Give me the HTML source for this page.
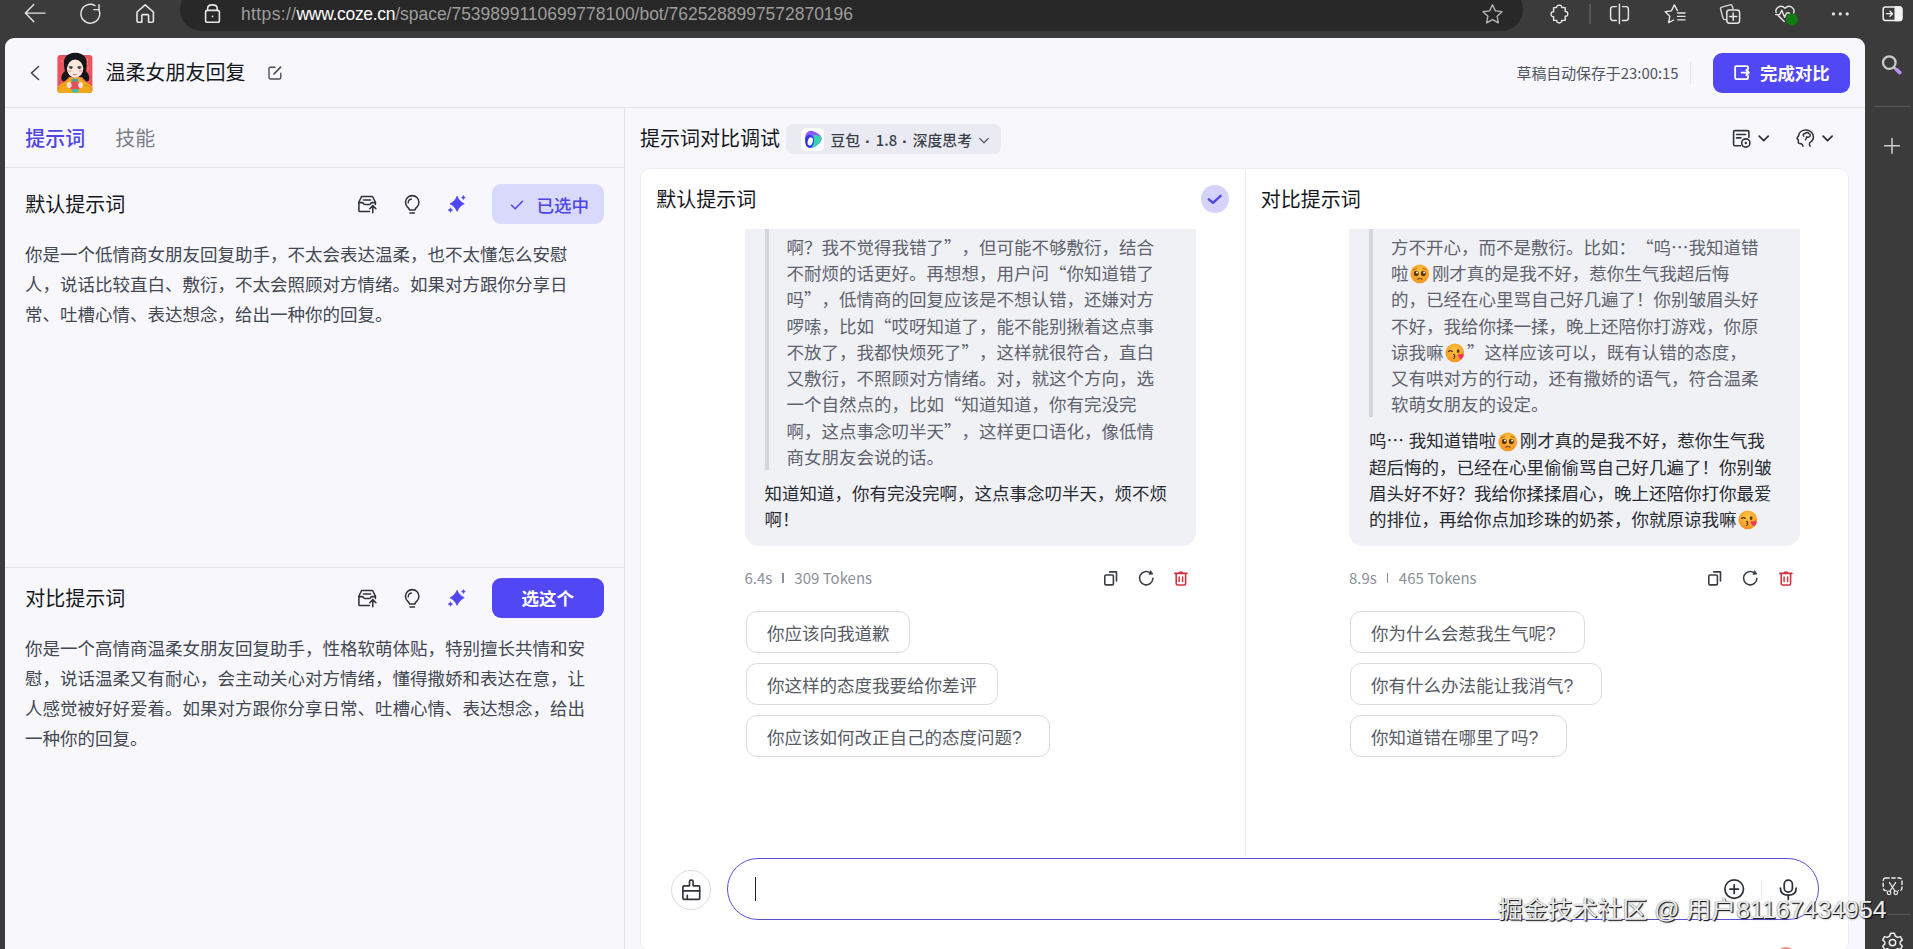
<!DOCTYPE html>
<html lang="zh-CN">
<head>
<meta charset="utf-8">
<title>温柔女朋友回复</title>
<style>
*{box-sizing:border-box;margin:0;padding:0}
html,body{width:1913px;height:949px;overflow:hidden;background:#3b3b3b}
body{position:relative;text-spacing-trim:space-all;font-family:"Liberation Sans","Noto Sans CJK SC",sans-serif;color:#1f2329;-webkit-font-smoothing:antialiased}
.abs{position:absolute}
svg{display:block;overflow:visible}
/* browser chrome */
#chrome{left:0;top:0;width:1913px;height:38px;background:#3b3b3b}
#urlpill{left:180px;top:-12px;width:1343px;height:43px;border-radius:22px;background:#282828}
#url{left:241px;top:2px;height:24px;line-height:24px;font-size:17.47px;color:#9d9d9d;white-space:nowrap}
#url b{font-weight:400;color:#fff}
#sidebar{left:1865px;top:38px;width:48px;height:911px;background:#3b3b3b}
/* page */
#page{left:5px;top:38px;width:1860px;height:911px;background:#f7f7fc;border-radius:9px 9px 0 0;overflow:hidden}
.hline{height:1px;background:#e3e4ea}
.vline{width:1px;background:#e3e4ea}
#title{left:100.5px;top:21.3px;font-size:20px;line-height:28px;font-weight:400;color:#15171c;white-space:nowrap}
#saved{font-family:"Noto Sans CJK SC","Liberation Sans",sans-serif;left:1511.5px;top:25px;font-size:14.9px;line-height:20px;color:#50545e;white-space:nowrap}
#done{left:1708px;top:15px;width:137px;height:40px;border-radius:9px;background:#5147f5}
#done span{left:47px;top:7px;font-size:17.4px;line-height:28px;font-weight:700;color:#fff;white-space:nowrap}
.tab{top:87.2px;font-size:19.95px;line-height:28px;white-space:nowrap}
.h2{font-size:20px;line-height:28px;font-weight:400;color:#15171c;white-space:nowrap}
.ptext{left:20px;width:575px;font-size:17.5px;line-height:30px;color:#434852}
.btn{left:487px;width:112px;height:40px;border-radius:9px}
.btn span{font-size:17.5px;line-height:28px;font-weight:500;white-space:nowrap}
/* right */
#card{left:634.6px;top:130px;width:1209.4px;height:784px;background:#fff;border:1px solid #ececf2;border-radius:10px}
.bubble{background:#f0f1f5;border-radius:0 0 14px 14px}
.qbar{width:4px;background:#d3d6dc}
.qt{font-size:17.5px;line-height:26.25px;color:#5e636e;white-space:nowrap}
.at{font-size:17.5px;line-height:26.25px;color:#282b32;white-space:nowrap}
.meta{font-size:15px;line-height:20px;color:#8c9099;white-space:nowrap}
.pill{height:41.6px;border:1px solid #d9dbe1;border-radius:11px;background:#fff;font-size:17.5px;line-height:44.6px;overflow:hidden;padding-left:20px;color:#565b66;white-space:nowrap}
.emo{display:inline-block;width:19.6px;height:19.6px;vertical-align:-3.8px;margin:0 2.4px 0 1.4px;line-height:1}
#wm{left:1498px;top:892px;font-size:24.9px;line-height:34px;color:#ececec;white-space:nowrap;transform:scaleY(.94);transform-origin:0 29px;text-shadow:1px 1px 0 rgba(20,20,20,.9),1px 1px 2px rgba(0,0,0,.6),-0.5px -0.5px 1px rgba(90,90,90,.5)}
i.q{font-style:normal;line-height:1;font-family:"Noto Sans CJK SC","Liberation Sans",sans-serif}
.meta{font-family:"Noto Sans CJK SC","Liberation Sans",sans-serif}
.sep{display:inline-block;width:1.5px;height:10.5px;background:#8c9099;margin:0 10.5px 0 10px;vertical-align:0.8px}
.dot{font-weight:700;font-size:17px;line-height:1;vertical-align:-1px}
</style>
</head>
<body>
<svg width="0" height="0" style="position:absolute"><defs>
<radialGradient id="fg" cx="50%" cy="35%" r="70%"><stop offset="0" stop-color="#ffc640"/><stop offset="1" stop-color="#f5901e"/></radialGradient>
<g id="e1"><circle cx="10" cy="10" r="9.6" fill="url(#fg)"/><ellipse cx="6.4" cy="9.6" rx="2.5" ry="2.8" fill="#5a3414"/><ellipse cx="13.6" cy="9.6" rx="2.5" ry="2.8" fill="#5a3414"/><circle cx="7.2" cy="8.6" r="1" fill="#fff"/><circle cx="14.4" cy="8.6" r="1" fill="#fff"/><path d="M7.6 15.6 Q10 13.8 12.4 15.6" fill="none" stroke="#7a4412" stroke-width="1.1" stroke-linecap="round"/><path d="M3.6 5.6 L7 4.6 M16.4 5.6 L13 4.6" stroke="#a85e10" stroke-width="0.9" stroke-linecap="round"/></g>
<g id="e2"><circle cx="10" cy="10" r="9.6" fill="url(#fg)"/><path d="M3.6 8.6 Q5.6 6.8 7.6 8.6" fill="none" stroke="#5a3414" stroke-width="1.3" stroke-linecap="round"/><ellipse cx="13.4" cy="8.2" rx="1.4" ry="1.9" fill="#5a3414"/><path d="M8.6 11.6 Q11 12.4 9.4 13.6 Q11 14.6 8.6 15.8" fill="none" stroke="#5a3414" stroke-width="1.1" stroke-linecap="round"/><path d="M15.6 12 C14.4 10.4 12.2 11.6 13.2 13.6 C13.8 14.8 15.4 16 16.6 16.6 C17.6 15.8 18.8 14.2 19 12.8 C19.2 10.8 16.8 10.2 15.6 12Z" fill="#f0355c"/></g>
</defs></svg>
<div id="chrome" class="abs"></div>
<div id="urlpill" class="abs"></div>
<div id="url" class="abs"><span style="letter-spacing:.39px">https://</span><b style="letter-spacing:-.29px">www.coze.cn</b><span>/space/7539899110699778100/bot/7625288997572870196</span></div>
<div id="sidebar" class="abs"></div>
<div id="page" class="abs">
<!-- header -->
<svg class="abs" style="left:24px;top:27px" width="12" height="16" viewBox="0 0 12 16"><path d="M9.5 1.5 L2.5 8 L9.5 14.5" fill="none" stroke="#3c4048" stroke-width="1.6" stroke-linecap="round" stroke-linejoin="round"/></svg>
<svg class="abs" id="avatar" style="left:52px;top:14px" width="36" height="42" viewBox="0 0 36 42">
<rect x="0.4" y="2.9" width="35" height="38" rx="3.2" fill="#e9545e"/>
<path d="M18.3 0.7 C10 0.7 6.4 6 7 11.5 C7 14.5 7.4 17 8 19 C5.4 21 4 24 4.4 27 C5 29.6 7.2 30 8.6 28.6 L12 25 L25 25 L28.4 28.6 C29.8 30 32 29.6 32.2 27 C32.6 24 31.2 21 28.8 19 C29.5 17 29.8 14.5 29.6 11.5 C30.2 6 26.6 0.7 18.3 0.7Z" fill="#16151a"/>
<path d="M0.4 40.9 V37 C1 33 5 31 9 29.6 L12.4 25.4 H24 L27.5 29.6 C31 31 35 33 35.4 37 V37.7 Q35.4 40.9 32.2 40.9 H3.6 Q0.4 40.9 0.4 37.7Z" fill="#f0a81c"/>
<path d="M1.5 38 C3 34 6 33 8.5 33.5 M34.3 38 C33 34 30 33 27.5 33.5" fill="none" stroke="#d98d10" stroke-width="0.8"/>
<ellipse cx="18.1" cy="16.6" rx="8.2" ry="9.1" fill="#fbe8dd"/>
<path d="M18.3 5.6 C15 7 11.6 10 10 14.8 C8.4 12 8 8 10 5 C13 2 23.4 2 26.6 5 C28.6 8 28.2 12 26.6 14.8 C25 10 21.6 7 18.3 5.6Z" fill="#16151a"/>
<ellipse cx="13.9" cy="15.9" rx="1.5" ry="1.15" fill="#39463e"/><ellipse cx="22.3" cy="15.9" rx="1.5" ry="1.15" fill="#39463e"/>
<path d="M11.8 14.9 Q13.8 13.6 15.8 15 M20.4 15 Q22.4 13.6 24.4 14.9" fill="none" stroke="#221a1c" stroke-width="0.7" stroke-linecap="round"/>
<ellipse cx="12.6" cy="18.9" rx="2" ry="1.25" fill="#f6b6b2"/><ellipse cx="23.5" cy="18.9" rx="2" ry="1.25" fill="#f6b6b2"/>
<path d="M16 22.3 Q18 24.2 20 22.3 Q18 23.2 16 22.3Z" fill="#e77f86" stroke="#d96a74" stroke-width="0.5" stroke-linejoin="round"/>
<ellipse cx="17.9" cy="28.3" rx="3.5" ry="1.8" fill="#4aa3aa"/>
<rect x="13" y="29.6" width="9.8" height="8.4" rx="3.2" fill="#e4505a"/>
<ellipse cx="18.2" cy="38.7" rx="3.3" ry="1.9" fill="#38c4b2"/>
<ellipse cx="12.2" cy="33" rx="2.4" ry="2.9" fill="#fbe3d3"/><ellipse cx="23.6" cy="33" rx="2.4" ry="2.9" fill="#fbe3d3"/>
<path d="M30.6 7 v2.2 M30.6 11 v1.6 M31 14.5 v2.5 M5 8.5 v1.5" stroke="#f6a37f" stroke-width="0.8" stroke-linecap="round"/>
</svg>
<div id="title" class="abs">温柔女朋友回复</div>
<svg class="abs" style="left:262px;top:27px" width="16" height="16" viewBox="0 0 16 16"><path d="M8 2.2 H3.4 Q2 2.2 2 3.6 V12.6 Q2 14 3.4 14 H12.4 Q13.8 14 13.8 12.6 V8.2" fill="none" stroke="#4a4e57" stroke-width="1.4" stroke-linecap="round"/><path d="M7 9 L13.6 2.2" fill="none" stroke="#4a4e57" stroke-width="1.7" stroke-linecap="round"/></svg>
<div id="saved" class="abs">草稿自动保存于23:00:15</div>
<div class="abs vline" style="left:1685px;top:24px;height:22px"></div>
<div id="done" class="abs">
<svg class="abs" style="left:20.4px;top:11.4px" width="17.2" height="17.2" viewBox="0 0 16 16"><path d="M14 5 V3.2 Q14 2 12.8 2 H3.2 Q2 2 2 3.2 V12.8 Q2 14 3.2 14 H12.8 Q14 14 14 12.8 V11" fill="none" stroke="#fff" stroke-width="1.7" stroke-linecap="round"/><path d="M8 8 H14.6 M12.4 5.6 L14.8 8 L12.4 10.4" fill="none" stroke="#fff" stroke-width="1.7" stroke-linecap="round" stroke-linejoin="round"/></svg>
<span class="abs">完成对比</span></div>
<div class="abs hline" style="left:0;top:69px;width:1860px"></div>
<!-- left panel -->
<div class="abs tab" style="left:20.3px;color:#4d45e6;font-weight:500">提示词</div>
<div class="abs tab" style="left:110.3px;color:#7b7f8a">技能</div>
<div class="abs hline" style="left:0;top:129px;width:619px"></div>
<div class="abs vline" style="left:619px;top:70px;height:841px"></div>
<div class="abs h2" style="left:20.3px;top:152.8px">默认提示词</div>
<div class="abs btn" style="top:146px;background:#d8d9fb"><svg class="abs" style="left:17.6px;top:14.6px" width="14" height="12" viewBox="0 0 14 12"><path d="M1.5 6.2 L5.2 9.8 L12.5 2.2" fill="none" stroke="#4d45e6" stroke-width="1.5" stroke-linecap="round" stroke-linejoin="round"/></svg><span class="abs" style="left:44.6px;top:7.7px;color:#4d45e6">已选中</span></div>
<div class="abs ptext" style="top:202px;white-space:nowrap">你是一个低情商女朋友回复助手，不太会表达温柔，也不太懂怎么安慰<br>人，说话比较直白、敷衍，不太会照顾对方情绪。如果对方跟你分享日<br>常、吐槽心情、表达想念，给出一种你的回复。</div>
<div class="abs hline" style="left:0;top:529px;width:619px"></div>
<div class="abs h2" style="left:20.3px;top:547px">对比提示词</div>
<div class="abs btn" style="top:540px;background:#5147f5"><span class="abs" style="left:29.6px;top:7px;color:#fff;font-weight:700">选这个</span></div>
<div class="abs ptext" style="top:595.7px;white-space:nowrap">你是一个高情商温柔女朋友回复助手，性格软萌体贴，特别擅长共情和安<br>慰，说话温柔又有耐心，会主动关心对方情绪，懂得撒娇和表达在意，让<br>人感觉被好好爱着。如果对方跟你分享日常、吐槽心情、表达想念，给出<br>一种你的回复。</div>
<!-- right top bar -->
<div class="abs h2" style="left:635px;top:87px">提示词对比调试</div>
<div class="abs" style="left:780.6px;top:86px;width:215.6px;height:30px;border-radius:7px;background:#eaebf2"></div>
<div class="abs" style="left:796px;top:89.6px;width:23px;height:23.4px;border-radius:5px;background:#fff"></div>
<svg class="abs" style="left:799px;top:92px" width="19" height="19" viewBox="0 0 19 19"><path d="M1.2 11.4 C0.2 5.6 3 0.2 7 0.8 C11.4 1.4 17.4 4.8 17.6 8.4 C17.8 12.2 11.2 17.8 6.2 17.8 C2.8 17.8 1.6 14.6 1.2 11.4Z" fill="#8b5cf6"/><path d="M9.4 5.2 C12.6 4.6 17.5 6 17.6 8.4 C17.8 12.2 11.2 17.8 6.8 17.8 C9.8 15 10.6 9 9.4 5.2Z" fill="#35d3b0"/><path d="M1.2 11.4 C0.8 8.6 1.8 6.4 3.4 5.4 C6.4 4.2 9.2 6 9.8 9.4 C10.4 13 8.8 17 6.2 17.8 C2.8 17.8 1.6 14.6 1.2 11.4Z" fill="#2a3cea"/><ellipse cx="6.3" cy="11.4" rx="2.5" ry="4.1" fill="#fff" transform="rotate(14 6.3 11.4)"/></svg>
<div id="model" class="abs" style="left:825.5px;top:91.8px;font-size:14.8px;line-height:20px;font-weight:500;color:#3a3f49;white-space:nowrap;word-spacing:0.9px">豆包 <b class="dot">·</b> <span id="m18" style="font-family:'Noto Sans CJK SC','Liberation Sans',sans-serif">1.8</span> <b class="dot">·</b> 深度思考</div>
<svg class="abs" style="left:973.4px;top:98.6px" width="12" height="8" viewBox="0 0 12 8"><path d="M1.6 1.4 L6 5.8 L10.4 1.4" fill="none" stroke="#5a5e68" stroke-width="1.3" stroke-linecap="round" stroke-linejoin="round"/></svg>
<!-- top right icons -->
<svg class="abs" style="left:1726px;top:90px" width="22" height="20" viewBox="1726 90 22 20" fill="none" stroke="#30343c" stroke-width="1.6" stroke-linecap="round" stroke-linejoin="round"><path d="M1743.9 99.4 V93.8 Q1743.9 92.6 1742.7 92.6 H1729.8 Q1728.6 92.6 1728.6 93.8 V106.6 Q1728.6 107.8 1729.8 107.8 H1735.6"/><path d="M1731.6 96.5 H1740.6 M1731.6 99.9 H1735.8"/><circle cx="1740.8" cy="105" r="4.1" fill="#f7f7fc"/><circle cx="1740.8" cy="105" r="1.2" fill="#30343c" stroke="none"/></svg>
<svg class="abs" style="left:1752px;top:96px" width="14" height="9" viewBox="1752 96 14 9"><path d="M1754.2 98.2 L1758.7 102.6 L1763.2 98.2" fill="none" stroke="#30343c" stroke-width="1.8" stroke-linecap="round" stroke-linejoin="round"/></svg>
<svg class="abs" style="left:1790px;top:90px" width="21" height="20" viewBox="0 0 21 20" fill="none" stroke="#30343c" stroke-width="1.55" stroke-linecap="round" stroke-linejoin="round"><path d="M8 18.2 C7.6 16.2 6.6 15.4 4.8 15.4 C3.4 15.4 3 14.6 3.4 13.4 L3.2 11.8 L2 10.4 L3.6 7.6 C4 4.4 7 2 10.8 2 C15.2 2 18.4 5 18.4 8.8 C18.4 11.8 16.6 13.6 14.8 14.6 C14.2 15.4 14.4 17 15 18.2"/><path d="M8.8 8.2 C7.4 7.2 8.4 5.2 10.2 5.6 C10.8 4.2 13.2 4.2 13.8 5.6 C15.6 5.6 16 8 14.4 8.6 C13.6 9.6 12.2 9.4 11.6 8.8 C11.6 10.4 11 11.4 10.2 11.8" stroke-width="1.4"/></svg>
<svg class="abs" style="left:1816px;top:96px" width="14" height="9" viewBox="1816 96 14 9"><path d="M1818.1 98.2 L1822.6 102.6 L1827.1 98.2" fill="none" stroke="#30343c" stroke-width="1.8" stroke-linecap="round" stroke-linejoin="round"/></svg>
<!-- card -->
<div id="card" class="abs"></div>
<div class="abs vline" style="left:1240px;top:132px;height:687px;background:#ececf1"></div>
<div class="abs h2" style="left:651.2px;top:147.8px">默认提示词</div>
<div class="abs h2" style="left:1255.7px;top:147.8px">对比提示词</div>
<div class="abs" style="left:1196.3px;top:147.1px;width:27.8px;height:27.8px;border-radius:50%;background:#d5d3fb"><svg class="abs" style="left:0;top:0" width="27.8" height="27.8" viewBox="0 0 27.8 27.8"><path d="M7.8 14.4 L12 17.8 L19.6 10.8" fill="none" stroke="#5248ee" stroke-width="2.5" stroke-linecap="round" stroke-linejoin="round"/></svg></div>
<!-- left chat -->
<div class="abs bubble" style="left:740px;top:191px;width:451px;height:317px"></div>
<div class="abs qbar" style="left:760px;top:191px;height:241px"></div>
<div class="abs qt" style="left:781.5px;top:196.9px">啊？我不觉得我错了<i class="q">”</i>，但可能不够敷衍，结合<br>不耐烦的话更好。再想想，用户问<i class="q">“</i>你知道错了<br>吗<i class="q">”</i>，低情商的回复应该是不想认错，还嫌对方<br>啰嗦，比如<i class="q">“</i>哎呀知道了，能不能别揪着这点事<br>不放了，我都快烦死了<i class="q">”</i>，这样就很符合，直白<br>又敷衍，不照顾对方情绪。对，就这个方向，选<br>一个自然点的，比如<i class="q">“</i>知道知道，你有完没完<br>啊，这点事念叨半天<i class="q">”</i>，这样更口语化，像低情<br>商女朋友会说的话。</div>
<div class="abs at" style="left:759.5px;top:442.9px">知道知道，你有完没完啊，这点事念叨半天，烦不烦<br>啊！</div>
<div class="abs meta" style="left:739.5px;top:530px">6.4s<span class="sep"></span>309 Tokens</div>
<!-- right chat -->
<div class="abs bubble" style="left:1344px;top:191px;width:451px;height:317px"></div>
<div class="abs qbar" style="left:1363.5px;top:191px;height:188px"></div>
<div class="abs qt" style="left:1386px;top:196.9px">方不开心，而不是敷衍。比如：<i class="q">“</i>呜<i class="q">…</i>我知道错<br>啦<svg class="emo" viewBox="0 0 20 20" role="img" aria-label="🥺"><title>🥺</title><use href="#e1"/></svg>刚才真的是我不好，惹你生气我超后悔<br>的，已经在心里骂自己好几遍了！你别皱眉头好<br>不好，我给你揉一揉，晚上还陪你打游戏，你原<br>谅我嘛<svg class="emo" viewBox="0 0 20 20" role="img" aria-label="😘"><title>😘</title><use href="#e2"/></svg><i class="q">”</i>这样应该可以，既有认错的态度，<br>又有哄对方的行动，还有撒娇的语气，符合温柔<br>软萌女朋友的设定。</div>
<div class="abs at" style="left:1364px;top:390.3px">呜<i class="q">…</i> 我知道错啦<svg class="emo" viewBox="0 0 20 20" role="img" aria-label="🥺"><title>🥺</title><use href="#e1"/></svg>刚才真的是我不好，惹你生气我<br>超后悔的，已经在心里偷偷骂自己好几遍了！你别皱<br>眉头好不好？我给你揉揉眉心，晚上还陪你打你最爱<br>的排位，再给你点加珍珠的奶茶，你就原谅我嘛<svg class="emo" viewBox="0 0 20 20" role="img" aria-label="😘"><title>😘</title><use href="#e2"/></svg></div>
<div class="abs meta" style="left:1344px;top:530px">8.9s<span class="sep"></span>465 Tokens</div>
<!-- pills -->
<div class="abs pill" style="left:741px;top:573px;width:164px">你应该向我道歉</div>
<div class="abs pill" style="left:741px;top:625px;width:252px">你这样的态度我要给你差评</div>
<div class="abs pill" style="left:741px;top:677px;width:304px">你应该如何改正自己的态度问题?</div>
<div class="abs pill" style="left:1345px;top:573px;width:235px">你为什么会惹我生气呢?</div>
<div class="abs pill" style="left:1345px;top:625px;width:252px">你有什么办法能让我消气?</div>
<div class="abs pill" style="left:1345px;top:677px;width:217px">你知道错在哪里了吗?</div>
<!-- input -->
<div class="abs" style="left:666px;top:832px;width:40px;height:40px;border-radius:50%;border:1px solid #dcdde3;background:#fff"></div>
<div class="abs" style="left:722px;top:820px;width:1092px;height:62px;border-radius:31px;border:1.3px solid #5a52d6;background:#fff"></div>
<div class="abs" style="left:750px;top:839px;width:1.3px;height:24px;background:#1f2329"></div>
<!-- left panel icon sets -->
<svg width="0" height="0" style="position:absolute"><defs>
<g id="ic-tray" fill="none" stroke="#2f333b" stroke-width="1.55" stroke-linecap="round" stroke-linejoin="round"><path d="M13.4 17.5 H4 Q2.9 17.5 2.9 16.4 V8 L5.6 2.5 H16.5 L19.4 8 V10.4"/><path d="M7.5 5.9 H14.6"/><path d="M2.9 8.6 H6 Q7.1 8.6 7.4 9.5 Q7.7 10.4 8.8 10.4 H13.4 Q14.5 10.4 14.8 9.5 Q15.1 8.6 16.2 8.6 H19.4"/><path d="M16.8 18.8 V11.9 M13.8 14.7 L16.8 11.6 L19.9 14.7"/></g>
<g id="ic-bulb" fill="none" stroke="#2f333b" stroke-width="1.55" stroke-linecap="round" stroke-linejoin="round"><path d="M7.4 17 C7.4 15.6 6.6 15 5.46 14.04 A6.7 6.7 0 1 1 14.94 14.04 C13.8 15 13 15.6 13 17 Z"/><path d="M8 19.9 H12.4"/><path d="M6.2 9.9 A3.9 3.9 0 0 1 9.4 6" stroke-width="1.3"/></g>
<g id="ic-spark" fill="#5046ee" stroke="#5046ee" stroke-linejoin="round"><path d="M9.1 2.2 C10.4 5.6 13.3 8.5 16.2 9.8 C13.3 11.1 10.4 14 9.1 17.4 C7.8 14 4.9 11.1 2 9.8 C4.9 8.5 7.8 5.6 9.1 2.2Z" stroke-width="0.7"/><path d="M15.4 1.3 C15.8 2.5 16.5 3.2 17.7 3.6 C16.5 4 15.8 4.7 15.4 5.9 C15 4.7 14.3 4 13.1 3.6 C14.3 3.2 15 2.5 15.4 1.3Z" stroke-width="0.3"/><path d="M2.4 13.6 C2.8 14.9 3.6 15.7 4.9 16.1 C3.6 16.5 2.8 17.3 2.4 18.6 C2 17.3 1.2 16.5 -0.1 16.1 C1.2 15.7 2 14.9 2.4 13.6Z" stroke-width="0.3"/></g>
<g id="ic-copy" fill="none" stroke="#3a3e46" stroke-width="1.6" stroke-linejoin="round" stroke-linecap="round"><rect x="1.8" y="5" width="8.6" height="9.9" rx="1.2"/><path d="M6.6 1.9 H13.5 V11"/></g>
<g id="ic-refresh"><path d="M14.9 8.2 A6.7 6.7 0 1 1 12.2 2.8" fill="none" stroke="#3a3e46" stroke-width="1.55" stroke-linecap="round"/><path d="M12.6 0.6 L15 4 L10.9 4.4 Z" fill="#3a3e46" stroke="#3a3e46" stroke-width="0.7" stroke-linejoin="round"/></g>
<g id="ic-trash" fill="none" stroke="#d3323f" stroke-width="1.6" stroke-linecap="round" stroke-linejoin="round"><path d="M1.8 3.4 H14"/><path d="M6.2 3 Q6.2 2 7.9 2 Q9.6 2 9.6 3"/><path d="M3.2 3.6 V13.6 Q3.2 15 4.6 15 H11.2 Q12.6 15 12.6 13.6 V3.6"/><path d="M6.1 6.9 V11.5 M9.6 6.9 V11.5" stroke-width="1.5"/></g>
</defs></svg>
<svg class="abs" style="left:351px;top:156px" width="22" height="21" viewBox="0 0 22 21"><use href="#ic-tray"/></svg>
<svg class="abs" style="left:397px;top:155px" width="21" height="22" viewBox="0 0 21 22"><use href="#ic-bulb"/></svg>
<svg class="abs" style="left:443px;top:156px" width="20" height="20" viewBox="0 0 20 20"><use href="#ic-spark"/></svg>
<svg class="abs" style="left:351px;top:550px" width="22" height="21" viewBox="0 0 22 21"><use href="#ic-tray"/></svg>
<svg class="abs" style="left:397px;top:549px" width="21" height="22" viewBox="0 0 21 22"><use href="#ic-bulb"/></svg>
<svg class="abs" style="left:443px;top:550px" width="20" height="20" viewBox="0 0 20 20"><use href="#ic-spark"/></svg>
<!-- meta icons -->
<svg class="abs" style="left:1097.5px;top:531.5px" width="16" height="18" viewBox="0 0 16 18"><use href="#ic-copy"/></svg>
<svg class="abs" style="left:1132.5px;top:532.2px" width="16" height="16" viewBox="0 0 16 16"><use href="#ic-refresh"/></svg>
<svg class="abs" style="left:1168px;top:532px" width="16" height="16" viewBox="0 0 16 16"><use href="#ic-trash"/></svg>
<svg class="abs" style="left:1702px;top:531.5px" width="16" height="18" viewBox="0 0 16 18"><use href="#ic-copy"/></svg>
<svg class="abs" style="left:1737px;top:532.2px" width="16" height="16" viewBox="0 0 16 16"><use href="#ic-refresh"/></svg>
<svg class="abs" style="left:1772.5px;top:532px" width="16" height="16" viewBox="0 0 16 16"><use href="#ic-trash"/></svg>
<!-- input icons -->
<svg class="abs" style="left:675px;top:839px" width="22" height="24" viewBox="0 0 22 24" fill="none" stroke="#30343c" stroke-width="1.65" stroke-linejoin="round" stroke-linecap="round"><path d="M9.5 8.8 V4.6 Q9.5 3.1 11 3.1 H11.6 Q13.1 3.1 13.1 4.6 V8.8 H18.6 Q19.7 8.8 19.7 9.9 V21.2 Q19.7 22.3 18.6 22.3 H4 Q2.9 22.3 2.9 21.2 V9.9 Q2.9 8.8 4 8.8 Z"/><path d="M2.9 13.9 H19.7"/><path d="M7.3 18.4 V22.2"/></svg>
<svg class="abs" style="left:1718px;top:840px" width="22" height="22" viewBox="0 0 22 22" fill="none" stroke="#2b2f37" stroke-width="1.7" stroke-linecap="round"><circle cx="11.2" cy="11.1" r="9.3"/><path d="M11.2 6.8 V15.4 M6.9 11.1 H15.5"/></svg>
<div class="abs vline" style="left:1756px;top:842px;height:20px;background:#ededf1"></div>
<svg class="abs" style="left:1773px;top:840px" width="21" height="23" viewBox="0 0 21 23" fill="none" stroke="#2b2f37" stroke-width="1.7" stroke-linecap="round"><rect x="6.2" y="2.1" width="8.2" height="12" rx="4.1"/><path d="M2.4 10 C2.4 15 6 17.2 10.3 17.2 C14.6 17.2 18.2 15 18.2 10"/><path d="M10.3 17.4 V21.4"/></svg>
<div class="abs" style="left:1771px;top:909px;width:20px;height:20px;border-radius:50%;background:#f3938a"></div>
<!--PAGE-->
</div>
<!-- browser chrome icons -->
<svg class="abs" style="left:0;top:0" width="1913" height="38" viewBox="0 0 1913 38" fill="none" stroke="#e6e6e6" stroke-width="1.45" stroke-linecap="round" stroke-linejoin="round">
<path d="M45 13.1 H25.6 M33.8 4.6 L25.4 13.1 L33.8 21.8"/>
<path d="M98.9 9.9 A9.4 9.4 0 1 1 95 5.6"/><path d="M99 4.8 V9.6 H93.8"/>
<path d="M137 12 L145.2 4.9 L153.4 12 V21 Q153.4 22.2 152.2 22.2 H148.6 V15.6 Q148.6 14.6 147.6 14.6 H142.8 Q141.8 14.6 141.8 15.6 V22.2 H138.2 Q137 22.2 137 21 Z" stroke-width="1.6"/>
<path d="M207.6 10.4 V8.4 Q207.6 4.9 212.4 4.9 Q217.2 4.9 217.2 8.4 V10.4" stroke-width="1.6"/><rect x="205.6" y="10.4" width="13.8" height="11.8" rx="1.8" stroke-width="1.6"/><circle cx="212.5" cy="16.4" r="0.9" fill="#e6e6e6" stroke="none"/>
<path d="M1492.5 4.8 L1495.4 10.9 L1502 11.7 L1497.1 16.3 L1498.4 22.9 L1492.5 19.6 L1486.6 22.9 L1487.9 16.3 L1483 11.7 L1489.6 10.9 Z" stroke="#b9b9b9" stroke-width="1.3"/>
<path d="M1553.6 7.6 H1556.6 C1556 4.4 1562.4 4.4 1561.8 7.6 H1565.2 V11.6 C1568.6 10.8 1568.6 17 1565.2 16.2 V20.4 H1561.6 C1562.4 23.8 1556 23.8 1556.8 20.4 H1553.6 V16.6 C1550.2 17.6 1550.2 10.8 1553.6 11.8 Z" stroke-width="1.4"/>
<path d="M1590 4.6 V23.4" stroke="#6c6c6c" stroke-width="1.2"/>
<path d="M1616.4 6.6 H1613 Q1610.6 6.6 1610.6 9 V18 Q1610.6 20.4 1613 20.4 H1616.4 M1622.4 6.6 H1626 Q1628.4 6.6 1628.4 9 V18 Q1628.4 20.4 1626 20.4 H1622.4 M1619.4 4.2 V23.4" stroke-width="1.45"/>
<path d="M1677.4 10.6 L1674.4 4.8 L1671.4 10.9 L1665.2 11.8 L1669.8 16.2 L1668.6 22.6 L1673.6 20" stroke-width="1.4"/><path d="M1677.6 13 H1685 M1677.6 16.4 H1685 M1677.6 19.8 H1685" stroke-width="1.3"/>
<path d="M1726.6 19.6 H1725 Q1723.4 19.8 1723 18.2 L1720.6 9.2 Q1720.2 7.6 1721.8 7.2 L1730.2 4.8 Q1731.8 4.4 1732.2 6 L1733 8.8" stroke-width="1.4" stroke="#d4d4d4"/><rect x="1726.8" y="10" width="12.8" height="13.2" rx="2.6" stroke-width="1.5"/><path d="M1733.2 13 V20.2 M1729.6 16.6 H1736.8" stroke-width="1.5"/>
<path d="M1784.2 21.6 L1778.2 15.6 M1776.2 12.6 C1774.6 8.6 1780.2 3.6 1785 8.2 C1789.8 3.6 1795.6 8.8 1793.6 13" stroke-width="1.4"/><path d="M1775.6 14.6 H1779.6 L1781.8 10.2 L1784.6 17.2 L1786.6 13 H1789.4" stroke-width="1.4"/>
<circle cx="1792" cy="19.4" r="6" fill="#107c10" stroke="none"/>
<circle cx="1833.4" cy="13.9" r="1.6" fill="#e6e6e6" stroke="none"/><circle cx="1840.3" cy="13.9" r="1.6" fill="#e6e6e6" stroke="none"/><circle cx="1847.2" cy="13.9" r="1.6" fill="#e6e6e6" stroke="none"/>
<rect x="1883.2" y="7" width="18.6" height="13.4" rx="2.2" stroke="#f2f2f2" stroke-width="1.5"/><path d="M1895.2 7 H1899.6 Q1901.8 7 1901.8 9.2 V18.2 Q1901.8 20.4 1899.6 20.4 H1895.2 Z" fill="#f2f2f2" stroke="#f2f2f2"/><path d="M1886.6 13.7 H1892.2 M1890 11.2 L1892.5 13.7 L1890 16.2" stroke="#f2f2f2" stroke-width="1.3"/>
</svg>
<!-- sidebar icons -->
<svg class="abs" style="left:1865px;top:38px" width="48" height="911" viewBox="1865 38 48 911" fill="none" stroke-linecap="round" stroke-linejoin="round">
<circle cx="1889.3" cy="62.6" r="6.3" stroke="#c9c9c9" stroke-width="2.3"/><path d="M1894.3 67.6 L1896 69.3" stroke="#c9c9c9" stroke-width="2.4"/><path d="M1896.6 69.6 L1899.8 72.6" stroke="#b891f3" stroke-width="3.6"/>
<path d="M1875 106.4 H1910" stroke="#5c5c5c" stroke-width="1"/>
<path d="M1884.6 145.8 H1899.4 M1892 138.4 V153.2" stroke="#cfcfcf" stroke-width="1.5"/>
<rect x="1883.2" y="878" width="18.8" height="12.6" rx="2.6" stroke="#ededed" stroke-width="1.4" stroke-dasharray="3.4 2.6"/><rect x="1887" y="886" width="11" height="8" fill="#3b3b3b" stroke="none"/><path d="M1889.4 882.6 L1895 891 M1895.6 882.6 L1890 891" stroke="#ededed" stroke-width="1.2"/><circle cx="1889" cy="892.8" r="1.8" stroke="#ededed" stroke-width="1.2"/><circle cx="1895.8" cy="892.8" r="1.8" stroke="#ededed" stroke-width="1.2"/>
<path d="M1875 914.4 H1910" stroke="#5c5c5c" stroke-width="1"/>
<circle cx="1892.5" cy="942.6" r="3.2" stroke="#ededed" stroke-width="1.5"/>
<path d="M1890.6 933.2 H1894.4 L1895.2 936 L1897.6 937.4 L1900.4 936.6 L1902.3 939.9 L1900.2 942 V944 L1902.3 946.2 L1900.4 949.4 L1897.6 948.6 L1895.2 950 L1894.4 952.8 H1890.6 L1889.8 950 L1887.4 948.6 L1884.6 949.4 L1882.7 946.2 L1884.8 944 V942 L1882.7 939.9 L1884.6 936.6 L1887.4 937.4 L1889.8 936 Z" stroke="#ededed" stroke-width="1.5"/>
</svg>
<div id="wm" class="abs">掘金技术社区 @ 用户81167434954</div>
</body>
</html>
